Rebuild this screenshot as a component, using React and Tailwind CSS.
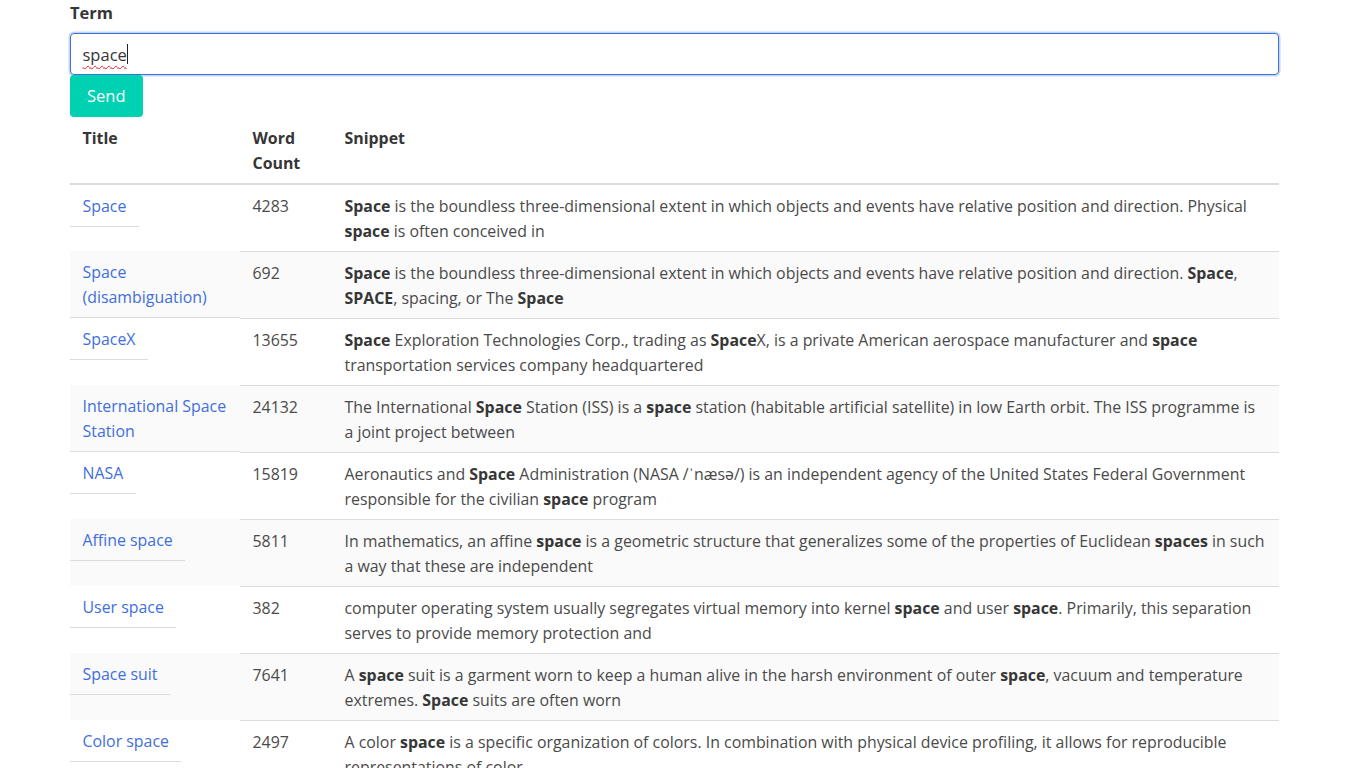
import React from "react";

const results = [
  {
    title: ["Space"],
    count: 4283,
    snippet: [
      <><strong>Space</strong> is the boundless three-dimensional extent in which objects and events have relative position and direction. Physical</>,
      <><strong>space</strong> is often conceived in</>,
    ],
  },
  {
    title: ["Space", "(disambiguation)"],
    count: 692,
    snippet: [
      <><strong>Space</strong> is the boundless three-dimensional extent in which objects and events have relative position and direction. <strong>Space</strong>,</>,
      <><strong>SPACE</strong>, spacing, or The <strong>Space</strong></>,
    ],
  },
  {
    title: ["SpaceX"],
    count: 13655,
    snippet: [
      <><strong>Space</strong> Exploration Technologies Corp., trading as <strong>Space</strong>X, is a private American aerospace manufacturer and <strong>space</strong></>,
      <>transportation services company headquartered</>,
    ],
  },
  {
    title: ["International Space", "Station"],
    count: 24132,
    snippet: [
      <>The International <strong>Space</strong> Station (ISS) is a <strong>space</strong> station (habitable artificial satellite) in low Earth orbit. The ISS programme is</>,
      <>a joint project between</>,
    ],
  },
  {
    title: ["NASA"],
    count: 15819,
    snippet: [
      <>Aeronautics and <strong>Space</strong> Administration (NASA /ˈnæsə/) is an independent agency of the United States Federal Government</>,
      <>responsible for the civilian <strong>space</strong> program</>,
    ],
  },
  {
    title: ["Affine space"],
    count: 5811,
    snippet: [
      <>In mathematics, an affine <strong>space</strong> is a geometric structure that generalizes some of the properties of Euclidean <strong>spaces</strong> in such</>,
      <>a way that these are independent</>,
    ],
  },
  {
    title: ["User space"],
    count: 382,
    snippet: [
      <>computer operating system usually segregates virtual memory into kernel <strong>space</strong> and user <strong>space</strong>. Primarily, this separation</>,
      <>serves to provide memory protection and</>,
    ],
  },
  {
    title: ["Space suit"],
    count: 7641,
    snippet: [
      <>A <strong>space</strong> suit is a garment worn to keep a human alive in the harsh environment of outer <strong>space</strong>, vacuum and temperature</>,
      <>extremes. <strong>Space</strong> suits are often worn</>,
    ],
  },
  {
    title: ["Color space"],
    count: 2497,
    snippet: [
      <>A color <strong>space</strong> is a specific organization of colors. In combination with physical device profiling, it allows for reproducible</>,
      <>representations of color</>,
    ],
  },
  {
    title: ["Outer space"],
    count: 8472,
    snippet: [
      <>Outer <strong>space</strong> is the expanse that exists beyond Earth and between celestial bodies. Outer <strong>space</strong> is not completely empty—it is</>,
      <>a near-perfect vacuum</>,
    ],
  },
];

const Lines = ({ lines }) =>
  lines.map((line, i) => (
    <React.Fragment key={i}>
      {i > 0 && <br />}
      {line}
    </React.Fragment>
  ));

export default function App() {
  return (
    <div className="bg-white min-h-screen font-['Open_Sans',sans-serif] text-[15.9px] leading-[25px] text-[#4a4a4a]">
      <div className="ml-[70px] w-[1209px]">
        {/* search form */}
        <label className="block font-bold text-[16.5px] text-[#363636] mb-[8px]">Term</label>
        <div className="h-[42px] rounded-[4px] border border-[#3b73d8] shadow-[0_0_0_1.5px_rgba(59,115,216,0.3)] pl-[11.5px] flex items-center text-[16.5px] text-[#363636]">
          <span className="underline decoration-wavy decoration-[#e02020] decoration-1 underline-offset-[4px]">space</span>
          <span className="inline-block w-px h-[20px] bg-[#222]" />
        </div>
        <button className="h-[41.5px] px-[17px] rounded-[4px] bg-[#00d1b2] text-white text-[16.5px]">
          Send
        </button>

        {/* results */}
        <table className="w-[1209px] table-fixed border-collapse">
          <colgroup>
            <col className="w-[170px]" />
            <col className="w-[92px]" />
            <col className="w-[947px]" />
          </colgroup>
          <thead>
            <tr className="text-left text-[#363636]">
              <th className="align-top font-bold px-[12.5px] pt-[9px] pb-[7px] border-b-2 border-[#dbdbdb]">Title</th>
              <th className="align-top font-bold px-[12.5px] pt-[9px] pb-[7px] border-b-2 border-[#dbdbdb]">
                Word<br />Count
              </th>
              <th className="align-top font-bold px-[12.5px] pt-[9px] pb-[7px] border-b-2 border-[#dbdbdb]">Snippet</th>
            </tr>
          </thead>
          <tbody>
            {results.map((r, i) => (
              <tr key={i} className={i % 2 === 1 ? "bg-[#fafafa]" : ""}>
                <td className="align-top p-0">
                  <div
                    className={`${r.title.length > 1 ? "block" : "inline-block"} px-[12.5px] pt-[9px] pb-[7px] border-b border-[#dbdbdb] whitespace-nowrap`}
                  >
                    <a href="#" className="text-[#3f6fdc]">
                      <Lines lines={r.title} />
                    </a>
                  </div>
                </td>
                <td className="align-top px-[12.5px] pt-[9px] pb-[7px] border-b border-[#dbdbdb]">{r.count}</td>
                <td className="align-top px-[12.5px] pt-[9px] pb-[7px] border-b border-[#dbdbdb] whitespace-nowrap [&_strong]:font-bold [&_strong]:text-[#363636]">
                  <Lines lines={r.snippet} />
                </td>
              </tr>
            ))}
          </tbody>
        </table>
      </div>
    </div>
  );
}
